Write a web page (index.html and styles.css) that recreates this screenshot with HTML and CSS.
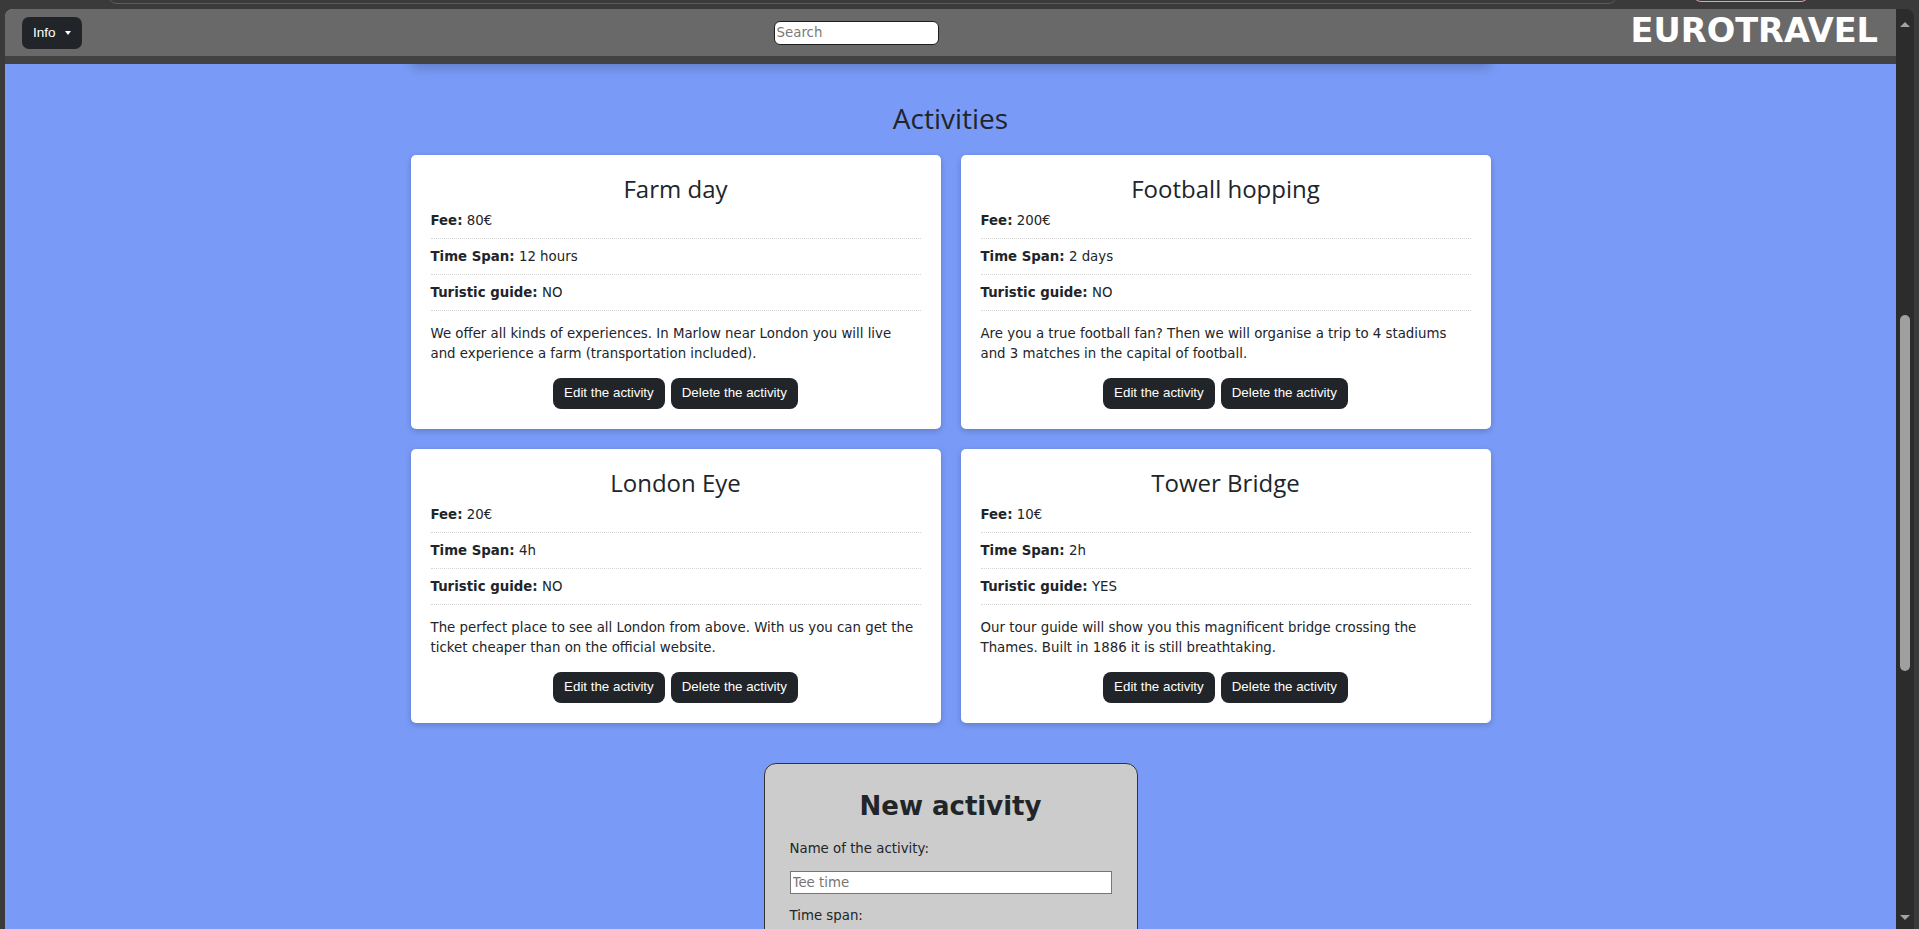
FILE: index.html
```html
<!DOCTYPE html>
<html lang="en">
<head>
<meta charset="utf-8">
<title>EUROTRAVEL - Activities</title>
<link rel="stylesheet" href="styles.css">
</head>
<body>
<div class="chrome">
  <div class="urlbar"></div>
  <div class="chrome-btn"></div>
</div>
<div class="window">
  <div class="page">
    <nav class="navbar">
      <button class="info-btn" type="button">Info</button>
      <form class="search-form"><input class="search" type="text" placeholder="Search"></form>
      <div class="brand">EUROTRAVEL</div>
    </nav>
    <main class="main">
      <div class="prev-card"></div>
      <h2 class="section-title">Activities</h2>
      <div class="cards">
        <div class="card">
          <h3 class="card-title">Farm day</h3>
          <ul class="facts">
            <li><b>Fee:</b> 80€</li>
            <li><b>Time Span:</b> 12 hours</li>
            <li><b>Turistic guide:</b> NO</li>
          </ul>
          <p class="desc">We offer all kinds of experiences. In Marlow near London you will live and experience a farm (transportation included).</p>
          <div class="actions"><button class="btn" type="button">Edit the activity</button><button class="btn" type="button">Delete the activity</button></div>
        </div>
        <div class="card">
          <h3 class="card-title">Football hopping</h3>
          <ul class="facts">
            <li><b>Fee:</b> 200€</li>
            <li><b>Time Span:</b> 2 days</li>
            <li><b>Turistic guide:</b> NO</li>
          </ul>
          <p class="desc">Are you a true football fan? Then we will organise a trip to 4 stadiums and 3 matches in the capital of football.</p>
          <div class="actions"><button class="btn" type="button">Edit the activity</button><button class="btn" type="button">Delete the activity</button></div>
        </div>
        <div class="card">
          <h3 class="card-title">London Eye</h3>
          <ul class="facts">
            <li><b>Fee:</b> 20€</li>
            <li><b>Time Span:</b> 4h</li>
            <li><b>Turistic guide:</b> NO</li>
          </ul>
          <p class="desc">The perfect place to see all London from above. With us you can get the ticket cheaper than on the official website.</p>
          <div class="actions"><button class="btn" type="button">Edit the activity</button><button class="btn" type="button">Delete the activity</button></div>
        </div>
        <div class="card">
          <h3 class="card-title">Tower Bridge</h3>
          <ul class="facts">
            <li><b>Fee:</b> 10€</li>
            <li><b>Time Span:</b> 2h</li>
            <li><b>Turistic guide:</b> YES</li>
          </ul>
          <p class="desc">Our tour guide will show you this magnificent bridge crossing the Thames. Built in 1886 it is still breathtaking.</p>
          <div class="actions"><button class="btn" type="button">Edit the activity</button><button class="btn" type="button">Delete the activity</button></div>
        </div>
      </div>
      <form class="new-box">
        <h2 class="new-title">New activity</h2>
        <label class="field-label" for="name">Name of the activity:</label>
        <input class="field" id="name" type="text" placeholder="Tee time">
        <label class="field-label" for="span">Time span:</label>
        <input class="field" id="span" type="text" placeholder="2h">
        <label class="field-label" for="fee">Fee:</label>
        <input class="field" id="fee" type="text" placeholder="50€">
      </form>
    </main>
  </div>
  <div class="scrollbar">
    <div class="sb-up"></div>
    <div class="sb-track"><div class="sb-thumb"></div></div>
    <div class="sb-down"></div>
  </div>
</div>
</body>
</html>
```
FILE: styles.css
```css
* { box-sizing: border-box; }
html, body { margin: 0; height: 100%; }
body {
  background: #3a3a3a;
  overflow: hidden;
  font-family: "DejaVu Sans", Verdana, sans-serif;
  color: #212529;
}

/* browser chrome */
.chrome {
  height: 9px;
  display: flex;
  align-items: flex-end;
  overflow: hidden;
}
.urlbar {
  flex: none;
  margin-left: 107px;
  width: 1511px;
  height: 20px;
  margin-bottom: 5px;
  border: 1px solid #5c5c5c;
  border-radius: 10px;
}
.chrome-btn {
  flex: none;
  margin-left: 75px;
  width: 116px;
  height: 20px;
  margin-bottom: 7px;
  border: 1px solid #e8a0a0;
  border-radius: 8px;
}
.window {
  display: flex;
  height: 920px;
  margin: 0 5px;
  border-radius: 8px 8px 0 0;
  overflow: hidden;
}
.page {
  flex: 1;
  min-width: 0;
  display: flex;
  flex-direction: column;
  background: #799bf7;
}

/* navbar */
.navbar {
  flex: none;
  height: 55px;
  background: #696969;
  border-bottom: 8px solid #424242;
  display: flex;
  align-items: center;
  justify-content: space-between;
  padding: 0 18px 0 17px;
  position: relative;
  z-index: 1;
}
.info-btn {
  height: 32px;
  padding: 0 11px;
  background: #212529;
  color: #fff;
  border: 0;
  border-radius: 7px;
  font-family: "Liberation Sans", Arial, sans-serif;
  font-size: 13.5px;
  display: flex;
  align-items: center;
}
.info-btn::after {
  content: "";
  margin-left: 9px;
  border-top: 4px solid #fff;
  border-left: 3.5px solid transparent;
  border-right: 3.5px solid transparent;
}
.search-form { margin: 0; }
.search {
  display: block;
  width: 165px;
  height: 24px;
  padding: 0 2px;
  border: 1px solid #1e1e1e;
  border-radius: 6px;
  background: #fff;
  font-family: "DejaVu Sans", Verdana, sans-serif;
  font-size: 13.33px;
}
.search::placeholder { color: #7a7a7a; }
.brand {
  color: #fff;
  font-family: "DejaVu Sans", Verdana, sans-serif;
  font-weight: bold;
  font-size: 33.6px;
  line-height: 34px;
  margin-bottom: 4px;
}

/* main */
.main {
  flex: 1;
  overflow: hidden;
}
.prev-card {
  width: 1080px;
  height: 40px;
  margin: -40px auto 0;
  background: #fff;
  border-radius: 5px;
  box-shadow: 0 4px 12px rgba(0, 0, 0, 0.2);
}
.section-title {
  font-family: "Open Sans", sans-serif;
  font-weight: 400;
  font-size: 28px;
  line-height: 1.2;
  text-align: center;
  margin: 38px 0 19px;
}
.cards {
  display: grid;
  grid-template-columns: repeat(2, 530px);
  gap: 20px;
  justify-content: center;
}
.card {
  background: #fff;
  border-radius: 5px;
  padding: 20px;
  box-shadow: 0 2px 6px rgba(0, 0, 0, 0.2);
}
.card-title {
  font-family: "Open Sans", sans-serif;
  font-weight: 400;
  font-size: 24px;
  line-height: 28px;
  text-align: center;
  margin: 0;
}
.facts {
  list-style: none;
  margin: 0;
  padding: 0;
  font-size: 13.33px;
  line-height: 19px;
}
.facts li {
  padding: 8px 0;
  border-bottom: 1px dotted #d6d6d6;
}
.desc {
  margin: 13px 0 14px;
  padding-right: 4px;
  font-size: 13.33px;
  line-height: 20px;
}
.actions {
  display: flex;
  justify-content: center;
  gap: 6px;
}
.btn {
  font-family: "Liberation Sans", Arial, sans-serif;
  font-size: 13.33px;
  line-height: 20px;
  padding: 5.5px 11px;
  background: #212529;
  color: #fff;
  border: 0;
  border-radius: 8px;
}

/* new activity form */
.new-box {
  width: 374px;
  margin: 40px auto 0;
  background: #cccccc;
  border: 1px solid #333;
  border-radius: 12px;
  padding: 27px 25px 26px;
  font-size: 13.33px;
}
.new-title {
  font-size: 26px;
  line-height: 31px;
  font-weight: bold;
  text-align: center;
  margin: 0 0 17px;
}
.field-label {
  display: block;
  line-height: 20px;
  margin-bottom: 12px;
}
.field {
  display: block;
  width: 100%;
  height: 23px;
  padding: 1px 2px;
  margin: 0 0 12px;
  border: 1px solid #767676;
  background: #fff;
  font-family: "DejaVu Sans", Verdana, sans-serif;
  font-size: 13.33px;
}
.field::placeholder { color: #767676; }

/* scrollbar */
.scrollbar {
  flex: none;
  width: 18px;
  background: #2c2c2c;
  display: flex;
  flex-direction: column;
  align-items: center;
  padding: 13px 0 9px;
}
.sb-up {
  width: 0;
  height: 0;
  border-left: 5px solid transparent;
  border-right: 5px solid transparent;
  border-bottom: 5px solid #a3a3a3;
}
.sb-track {
  flex: 1;
  width: 100%;
  display: flex;
  justify-content: center;
}
.sb-thumb {
  width: 10px;
  height: 356px;
  margin-top: 288px;
  background: #9f9f9f;
  border-radius: 5px;
}
.sb-down {
  width: 0;
  height: 0;
  border-left: 5px solid transparent;
  border-right: 5px solid transparent;
  border-top: 5px solid #a3a3a3;
}
```
